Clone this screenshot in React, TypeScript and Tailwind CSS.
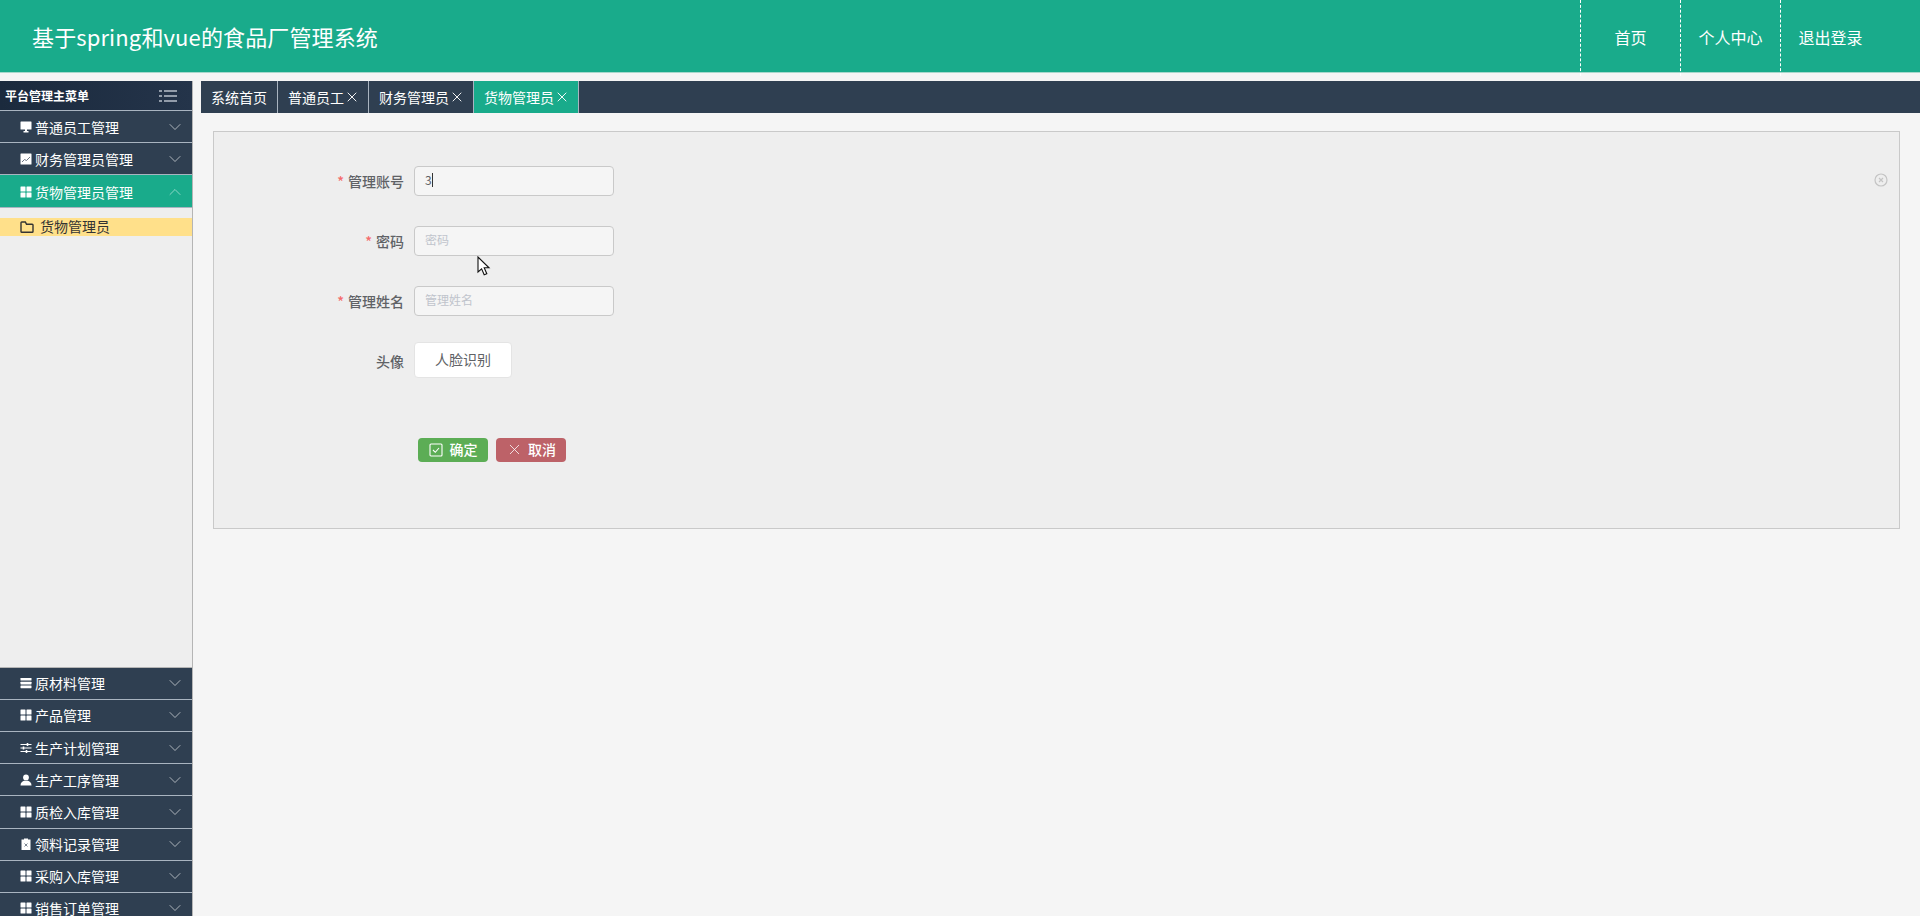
import { ChevronDown, ChevronUp, X } from 'lucide-react'
import type { ReactNode } from 'react'

const cjk = "font-['Noto_Sans_CJK_SC','Noto_Sans',sans-serif]"

const Grid = () => (
  <svg viewBox="0 0 12 12" className="h-3 w-3 fill-white">
    <rect x="0.5" y="0.5" width="5" height="5" rx="0.5" />
    <rect x="6.5" y="0.5" width="5" height="5" rx="0.5" />
    <rect x="0.5" y="6.5" width="5" height="5" rx="0.5" />
    <rect x="6.5" y="6.5" width="5" height="5" rx="0.5" />
  </svg>
)

const Monitor = () => (
  <svg viewBox="0 0 12 12" className="h-3 w-3 fill-white">
    <rect x="0.5" y="0.5" width="11" height="8" rx="0.5" />
    <rect x="3.5" y="10" width="5" height="1.5" />
    <rect x="5" y="8" width="2" height="2" />
  </svg>
)

const ChartBox = () => (
  <svg viewBox="0 0 12 12" className="h-3 w-3">
    <rect x="0.5" y="0.5" width="11" height="11" rx="0.5" fill="#fff" />
    <path d="M2 9l2.5-2.5 2 1L10 4" fill="none" stroke="#5b6776" strokeWidth="0.9" />
  </svg>
)

const Rows = () => (
  <svg viewBox="0 0 12 12" className="h-3 w-3 fill-white">
    <rect x="0.5" y="1" width="11" height="2.6" rx="0.4" />
    <rect x="0.5" y="4.8" width="11" height="2.6" rx="0.4" />
    <rect x="0.5" y="8.6" width="11" height="2.6" rx="0.4" />
  </svg>
)

const Sliders = () => (
  <svg viewBox="0 0 12 12" className="h-3 w-3 stroke-white" fill="none" strokeWidth="1">
    <path d="M0.5 2.5h11M0.5 6h11M0.5 9.5h11" />
    <path d="M7.5 1v3M3.5 4.5v3M6.5 8v3" strokeWidth="1.6" />
  </svg>
)

const Person = () => (
  <svg viewBox="0 0 12 12" className="h-3 w-3 fill-white">
    <circle cx="6" cy="3.4" r="2.9" />
    <path d="M0.5 11.5c0-3 2-4.4 3.6-4.8h3.8c1.6.4 3.6 1.800 3.600 4.800z" />
  </svg>
)

const Clipboard = () => (
  <svg viewBox="0 0 12 12" className="h-3 w-3">
    <path d="M1.500 1.500h2.500V0.500h4v1h2.500v10.500h-9z" fill="#fff" />
    <path d="M4.500 5.500l3 3M7.500 5.500l-3 3" stroke="#5b6776" strokeWidth="0.8" />
  </svg>
)

const MenuRow = ({ icon, label, active }: { icon: ReactNode; label: string; active?: boolean }) => (
  <div
    className={`flex h-[32.2px] shrink-0 items-center border-b border-[#a9b4c0] pl-[20px] pr-[7px] text-[14px] text-white ${
      active ? 'bg-[#19ab8b] pt-[2px]' : 'bg-[#2f3f51]'
    }`}
  >
    <span className="flex w-[15px] shrink-0 items-center">{icon}</span>
    <span className="flex-1 leading-none">{label}</span>
    {active ? (
      <ChevronUp size={20} strokeWidth={1.2} className="text-white/50" />
    ) : (
      <ChevronDown size={20} strokeWidth={1.2} className="text-white/60" />
    )}
  </div>
)

const Tab = ({ label, closable, active }: { label: string; closable?: boolean; active?: boolean }) => (
  <div
    className={`flex h-full items-center border-r border-[#a9b4c0] pl-[10px] pr-[10px] text-[14px] ${
      active ? 'bg-[#19ab8b]' : ''
    }`}
  >
    {label}
    {closable && <X size={16} strokeWidth={1.4} className="-mr-[2px]" />}
  </div>
)

const Field = ({ label, placeholder, value }: { label: string; placeholder: string; value?: string }) => (
  <div className="flex h-[30px] items-center">
    <label className="w-[200px] pr-[10px] text-right text-[14px] font-medium text-[#606266]">
      <span className="mr-1 text-[#f56c6c]">*</span>
      {label}
    </label>
    <div className="flex h-[30px] w-[200px] items-center rounded border border-[#c9c9c9] bg-[#f5f5f5] px-[10px] pb-[2px] text-[12px]">
      {value ? (
        <>
          <span className="text-[#606266]">{value}</span>
          <span className="h-[14px] w-px bg-[#333]" />
        </>
      ) : (
        <span className="text-[#c0c4cc]">{placeholder}</span>
      )}
    </div>
  </div>
)

export default function App() {
  return (
    <div className={`relative h-[916px] w-[1920px] overflow-hidden bg-[#f5f5f5] ${cjk}`}>
      {/* header */}
      <header className="flex h-[73px] items-start justify-between border-b border-[#a8d8cc] bg-[#19ab8b] pr-[40px] text-white">
        <div className="pl-[32px] pt-[20px] text-[22px] leading-[33px] tracking-[0.13px]">基于spring和vue的食品厂管理系统</div>
        <nav className="flex text-[16px]">
          {['首页', '个人中心', '退出登录'].map((n) => (
            <div
              key={n}
              className="relative z-10 flex h-[76px] w-[100px] items-center justify-center border-l border-dashed border-white pb-[3px]"
            >
              {n}
            </div>
          ))}
        </nav>
      </header>

      <div className="mt-[8px] flex">
        {/* sidebar */}
        <aside className="flex h-[835px] w-[193px] shrink-0 flex-col overflow-hidden border-r border-[#b5b5b5] bg-[#eeeeee]">
          <div className="flex h-[30px] shrink-0 items-center justify-between border-b border-[#a9b4c0] bg-gradient-to-r from-[#1b2a3d] to-[#24344a] pl-[5px] pr-[15px] text-[12px] font-bold text-white">
            平台管理主菜单
            <svg viewBox="0 0 18 14" className="h-[14px] w-[18px] stroke-[#b8c0ca]" strokeWidth="1.5">
              <path d="M0 2h3M0 7h3M0 12h3M5 2h13M5 7h13M5 12h13" />
            </svg>
          </div>
          <MenuRow icon={<Monitor />} label="普通员工管理" />
          <MenuRow icon={<ChartBox />} label="财务管理员管理" />
          <MenuRow icon={<Grid />} label="货物管理员管理" active />

          <div className="h-[460px] shrink-0 border-b border-[#b5b5b5] pt-[10px]">
            <div className="flex h-[18px] items-center bg-[#ffe08a] pl-[20px] text-[14px] text-[#333]">
              <svg viewBox="0 0 14 12" fill="none" className="mr-[6px] h-[12px] w-[14px] stroke-[#333]" strokeWidth="1.4">
                <path d="M1 2.500V10.500a.8.8 0 0 0 .8.8h10.400a.8.8 0 0 0 .8-.8V4a.8.8 0 0 0-.8-.8H6.500L5.300 1H1.800a.8.8 0 0 0-.8.8z" />
              </svg>
              货物管理员
            </div>
          </div>

          <MenuRow icon={<Rows />} label="原材料管理" />
          <MenuRow icon={<Grid />} label="产品管理" />
          <MenuRow icon={<Sliders />} label="生产计划管理" />
          <MenuRow icon={<Person />} label="生产工序管理" />
          <MenuRow icon={<Grid />} label="质检入库管理" />
          <MenuRow icon={<Clipboard />} label="领料记录管理" />
          <MenuRow icon={<Grid />} label="采购入库管理" />
          <MenuRow icon={<Grid />} label="销售订单管理" />
        </aside>

        {/* main */}
        <main className="ml-[8px] flex-1">
          <div className="flex h-[32px] bg-[#2f3f51] text-white">
            <Tab label="系统首页" />
            <Tab label="普通员工" closable />
            <Tab label="财务管理员" closable />
            <Tab label="货物管理员" closable active />
          </div>

          <section className="relative ml-[12px] mr-[20px] mt-[18px] h-[398px] border border-[#c9c9c9] bg-[#eeeeee] pt-[34px]">
            <svg
              viewBox="0 0 14 14"
              fill="none"
              className="absolute right-[11px] top-[41px] h-[14px] w-[14px] stroke-[#c4c4c4]"
            >
              <circle cx="7" cy="7" r="6" strokeWidth="1.200" />
              <path d="M5 5l4 4M9 5l-4 4" strokeWidth="1.200" />
            </svg>

            <div className="flex flex-col gap-[30px]">
              <Field label="管理账号" placeholder="管理账号" value="3" />
              <Field label="密码" placeholder="密码" />
              <Field label="管理姓名" placeholder="管理姓名" />
            </div>

            <div className="mt-[26px] flex items-center">
              <label className="w-[200px] pr-[10px] pt-[2px] text-right text-[14px] font-medium text-[#606266]">头像</label>
              <div className="flex h-[36px] w-[98px] items-center justify-center rounded border border-[#e4e4e4] bg-white pb-[2px] text-[14px] text-[#606266]">
                人脸识别
              </div>
            </div>

            <div className="ml-[204px] mt-[60px] flex gap-[8px] text-[14px] font-medium text-white">
              <button className="flex h-[24px] w-[70px] items-center justify-center gap-[7px] rounded bg-[#5cad55] pb-[1px]">
                <svg viewBox="0 0 14 14" fill="none" className="h-[14px] w-[14px] stroke-white" strokeWidth="1.100">
                  <rect x="1" y="1" width="12" height="12" rx="1" />
                  <path d="M4 7l2.300 2.300L10 5" />
                </svg>
                确定
              </button>
              <button className="flex h-[24px] w-[70px] items-center justify-center gap-[5px] rounded bg-[#bd6268] pb-[1px]">
                <X size={17} strokeWidth={1.100} />
                取消
              </button>
            </div>
          </section>
        </main>
      </div>

      {/* mouse pointer */}
      <svg viewBox="0 0 14 22" className="absolute left-[477px] top-[256px] h-[22px] w-[14px]" fill="#fff" stroke="#111" strokeWidth="1.100">
        <path d="M1 1v15l3.600-3.200 2.600 6 2.600-1-2.600-6h4.800z" />
      </svg>
    </div>
  )
}
